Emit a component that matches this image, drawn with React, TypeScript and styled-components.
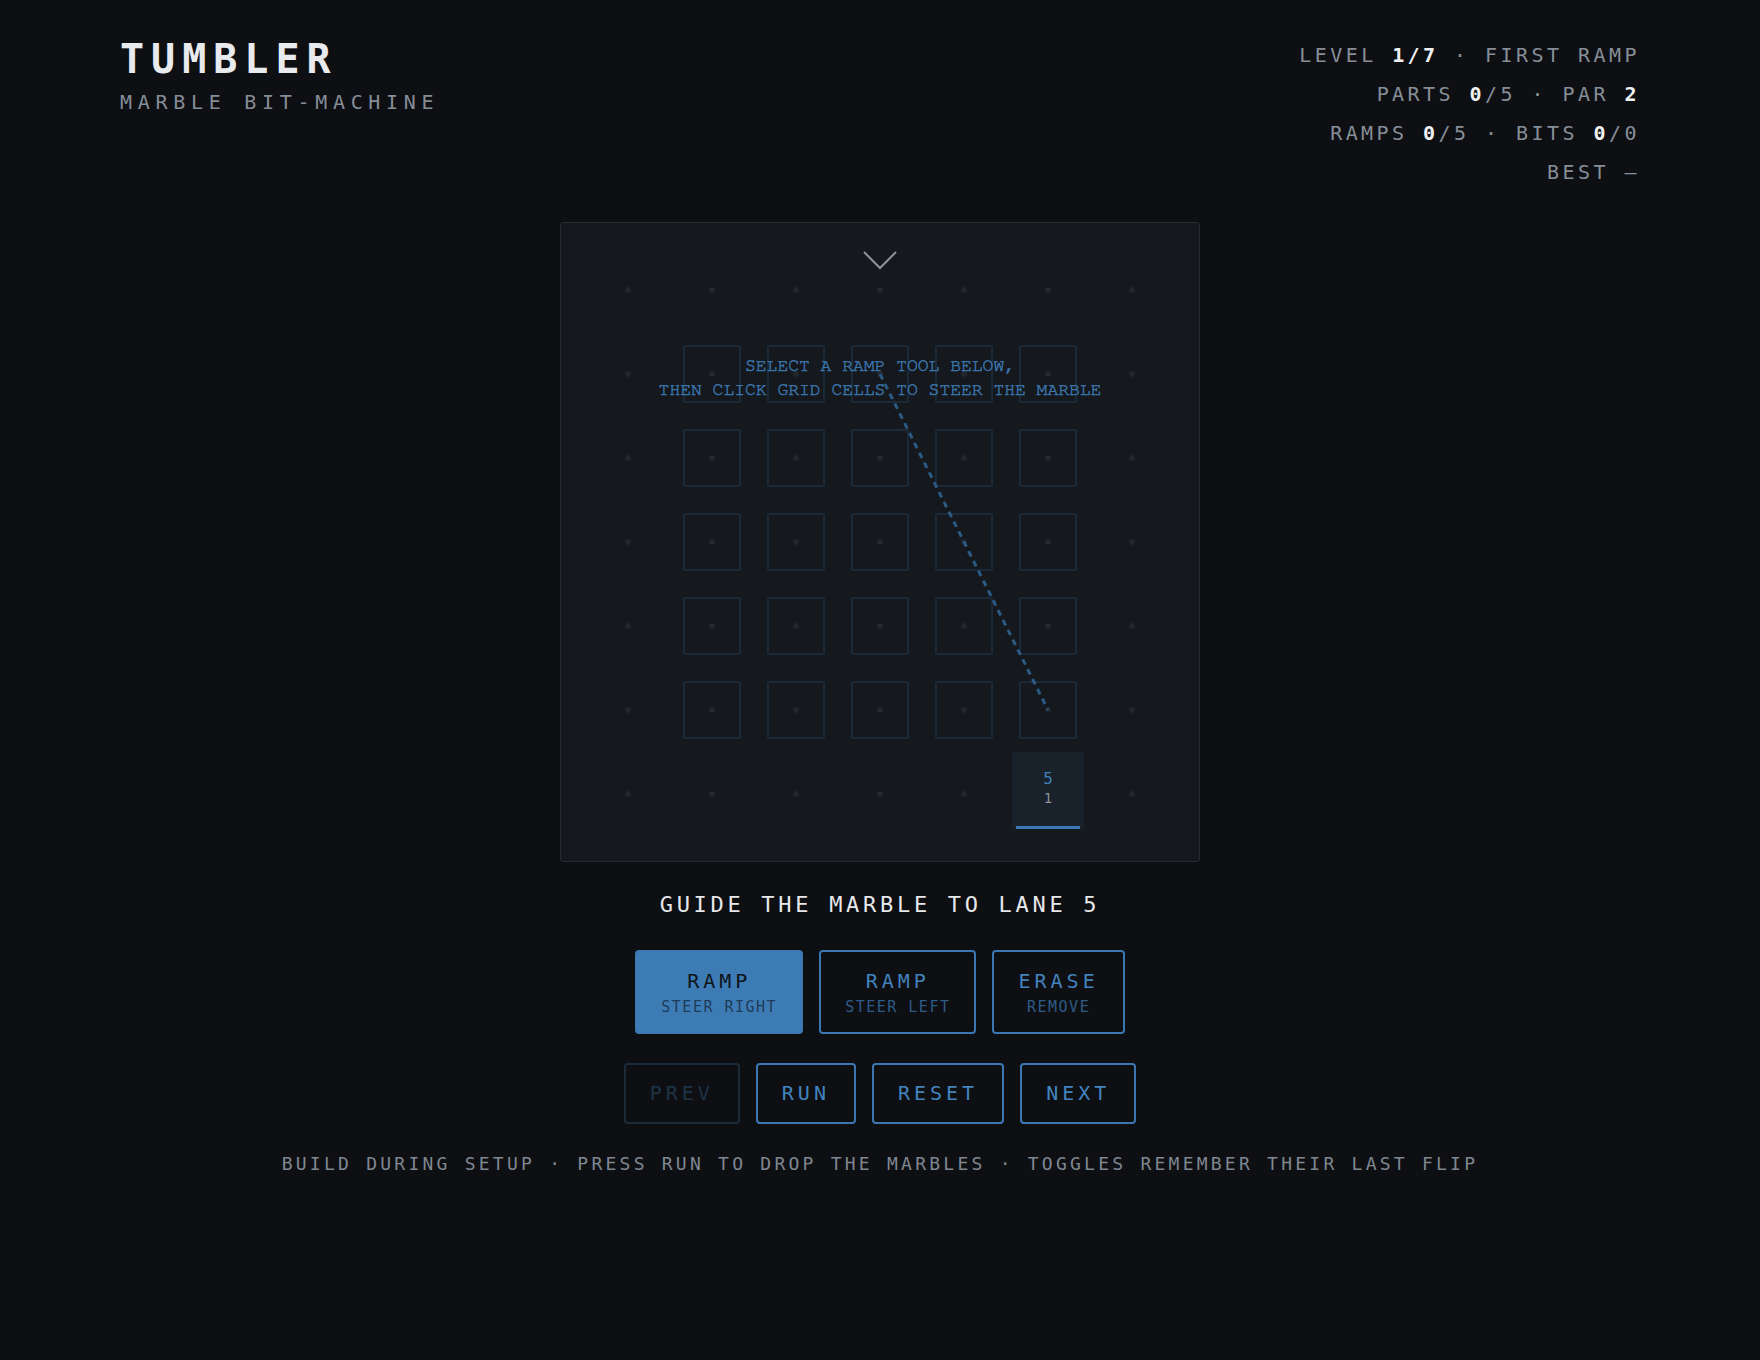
import React from "react";
import styled, { createGlobalStyle } from "styled-components";

const GlobalStyle = createGlobalStyle`
  html, body { margin: 0; padding: 0; background: #0e0f13; }
  body { font-family: "DejaVu Sans Mono", monospace; color: #868e98; }
  * { box-sizing: border-box; }
`;

const Page = styled.div`
  min-height: 1360px;
  padding: 36px 120px 0;
`;

const Header = styled.header`
  display: flex;
  justify-content: space-between;
  align-items: flex-start;
`;

const Brand = styled.div`
  display: flex;
  flex-direction: column;
`;

const Title = styled.h1`
  margin: 0;
  font-size: 40px;
  line-height: 46px;
  font-weight: 700;
  letter-spacing: 7px;
  color: #e8eaed;
`;

const Subtitle = styled.div`
  margin-top: 9px;
  font-size: 20px;
  line-height: 23px;
  letter-spacing: 5.7px;
  color: #858d97;
`;

const Stats = styled.div`
  display: flex;
  flex-direction: column;
  align-items: flex-end;
  font-size: 20px;
  line-height: 39px;
  letter-spacing: 3.45px;
  color: #868e98;
`;

const StatLine = styled.div``;

const Val = styled.b`
  color: #eef0f2;
  font-weight: 700;
`;

const Main = styled.main`
  display: flex;
  flex-direction: column;
  align-items: center;
  margin-top: 30px;
`;

const Board = styled.div`
  position: relative;
  width: 640px;
  height: 640px;
  padding: 25px;
  background: #15181d;
  border: 1px solid #272c33;
  border-radius: 3px;
`;

const Grid = styled.div`
  display: grid;
  grid-template-columns: repeat(7, 84px);
  grid-template-rows: repeat(7, 84px);
`;

const Cell = styled.div<{ $top?: boolean }>`
  display: flex;
  justify-content: center;
  align-items: ${(p) => (p.$top ? "flex-start" : "center")};
`;

const Dot = styled.span`
  width: 6px;
  height: 6px;
  border-radius: 50%;
  background: #22262d;
`;

const Slot = styled.div`
  width: 58px;
  height: 58px;
  display: flex;
  align-items: center;
  justify-content: center;
  border: 2px solid #1b2a38;
  border-radius: 2px;
`;

const LaneBox = styled.div`
  width: 72px;
  height: 77px;
  display: flex;
  flex-direction: column;
  align-items: center;
  padding: 18px 4px 0;
  background: #19212a;
`;

const LaneNum = styled.span`
  font-size: 16px;
  line-height: 18px;
  color: #3f80bb;
`;

const LaneCount = styled.span`
  margin-top: 2px;
  font-size: 14px;
  line-height: 16px;
  color: #8b929a;
`;

const LaneBar = styled.span`
  margin-top: auto;
  width: 100%;
  height: 3px;
  background: #3d7ab3;
`;

const Overlay = styled.svg`
  position: absolute;
  left: -1px;
  top: -1px;
  width: 640px;
  height: 640px;
  pointer-events: none;
`;

const Hint = styled.div`
  position: absolute;
  left: 0;
  right: 0;
  top: 132px;
  text-align: center;
  font-family: "Nimbus Mono PS", "Nimbus Mono L", "FreeMono", "Courier 10 Pitch", Courier, monospace;
  font-size: 18px;
  font-weight: 400;
  -webkit-text-stroke: 0.5px #3b76ad;
  line-height: 23.5px;
  color: #3b76ad;
  pointer-events: none;
`;

const Goal = styled.div`
  margin-top: 30px;
  font-size: 22px;
  line-height: 26px;
  letter-spacing: 3.7px;
  color: #e6e8eb;
`;

const ToolRow = styled.div`
  display: flex;
  gap: 16px;
  margin-top: 32px;
`;

const ToolButton = styled.button<{ $active?: boolean }>`
  display: flex;
  flex-direction: column;
  align-items: center;
  gap: 5px;
  padding: 17px 24px 16px;
  border: 2px solid #3b78b1;
  border-radius: 4px;
  background: ${(p) => (p.$active ? "#3d7bb5" : "transparent")};
  font-family: inherit;
  cursor: pointer;
`;

const ToolLabel = styled.span<{ $active?: boolean }>`
  font-size: 20px;
  line-height: 24px;
  letter-spacing: 4px;
  color: ${(p) => (p.$active ? "#0f1419" : "#4282bd")};
`;

const ToolSub = styled.span<{ $active?: boolean }>`
  font-size: 15px;
  line-height: 18px;
  letter-spacing: 1.5px;
  color: ${(p) => (p.$active ? "#1e3b58" : "#2d5b86")};
`;

const ActionRow = styled.div`
  display: flex;
  gap: 16px;
  margin-top: 29px;
`;

const ActionButton = styled.button<{ $disabled?: boolean }>`
  padding: 16px 24px 17px;
  border: 2px solid ${(p) => (p.$disabled ? "#1c2b39" : "#3b78b1")};
  border-radius: 4px;
  background: transparent;
  font-family: inherit;
  font-size: 20px;
  line-height: 24px;
  letter-spacing: 4px;
  color: ${(p) => (p.$disabled ? "#1f3447" : "#4284bf")};
  cursor: ${(p) => (p.$disabled ? "default" : "pointer")};
`;

const Footer = styled.div`
  margin-top: 29px;
  font-size: 18px;
  line-height: 22px;
  letter-spacing: 3.24px;
  color: #7f8791;
`;

const ROWS = 7;
const COLS = 7;

function renderCell(r: number, c: number) {
  if (r === 6 && c === 5) {
    return (
      <Cell key={`${r}-${c}`} $top>
        <LaneBox>
          <LaneNum>5</LaneNum>
          <LaneCount>1</LaneCount>
          <LaneBar />
        </LaneBox>
      </Cell>
    );
  }
  const isSlot = r >= 1 && r <= 5 && c >= 1 && c <= 5;
  return (
    <Cell key={`${r}-${c}`}>
      {isSlot ? (
        <Slot>
          <Dot />
        </Slot>
      ) : (
        <Dot />
      )}
    </Cell>
  );
}

export default function App() {
  const cells: React.ReactNode[] = [];
  for (let r = 0; r < ROWS; r++) {
    for (let c = 0; c < COLS; c++) {
      cells.push(renderCell(r, c));
    }
  }
  return (
    <>
      <GlobalStyle />
      <Page>
        <Header>
          <Brand>
            <Title>TUMBLER</Title>
            <Subtitle>MARBLE BIT-MACHINE</Subtitle>
          </Brand>
          <Stats>
            <StatLine>
              LEVEL <Val>1/7</Val> · FIRST RAMP
            </StatLine>
            <StatLine>
              PARTS <Val>0</Val>/5 · PAR <Val>2</Val>
            </StatLine>
            <StatLine>
              RAMPS <Val>0</Val>/5 · BITS <Val>0</Val>/0
            </StatLine>
            <StatLine>BEST —</StatLine>
          </Stats>
        </Header>
        <Main>
          <Board>
            <Grid>{cells}</Grid>
            <Overlay viewBox="0 0 640 640">
              <polyline
                points="304,30 320,46 336,30"
                fill="none"
                stroke="#8d949c"
                strokeWidth={2}
              />
              <line
                x1={320}
                y1={152}
                x2={488}
                y2={488}
                stroke="#2b5a84"
                strokeWidth={3}
                strokeDasharray="6 5"
              />
            </Overlay>
            <Hint>
              SELECT A RAMP TOOL BELOW,
              <br />
              THEN CLICK GRID CELLS TO STEER THE MARBLE
            </Hint>
          </Board>
          <Goal>GUIDE THE MARBLE TO LANE 5</Goal>
          <ToolRow>
            <ToolButton $active>
              <ToolLabel $active>RAMP</ToolLabel>
              <ToolSub $active>STEER RIGHT</ToolSub>
            </ToolButton>
            <ToolButton>
              <ToolLabel>RAMP</ToolLabel>
              <ToolSub>STEER LEFT</ToolSub>
            </ToolButton>
            <ToolButton>
              <ToolLabel>ERASE</ToolLabel>
              <ToolSub>REMOVE</ToolSub>
            </ToolButton>
          </ToolRow>
          <ActionRow>
            <ActionButton $disabled>PREV</ActionButton>
            <ActionButton>RUN</ActionButton>
            <ActionButton>RESET</ActionButton>
            <ActionButton>NEXT</ActionButton>
          </ActionRow>
          <Footer>
            BUILD DURING SETUP · PRESS RUN TO DROP THE MARBLES · TOGGLES REMEMBER THEIR LAST FLIP
          </Footer>
        </Main>
      </Page>
    </>
  );
}
